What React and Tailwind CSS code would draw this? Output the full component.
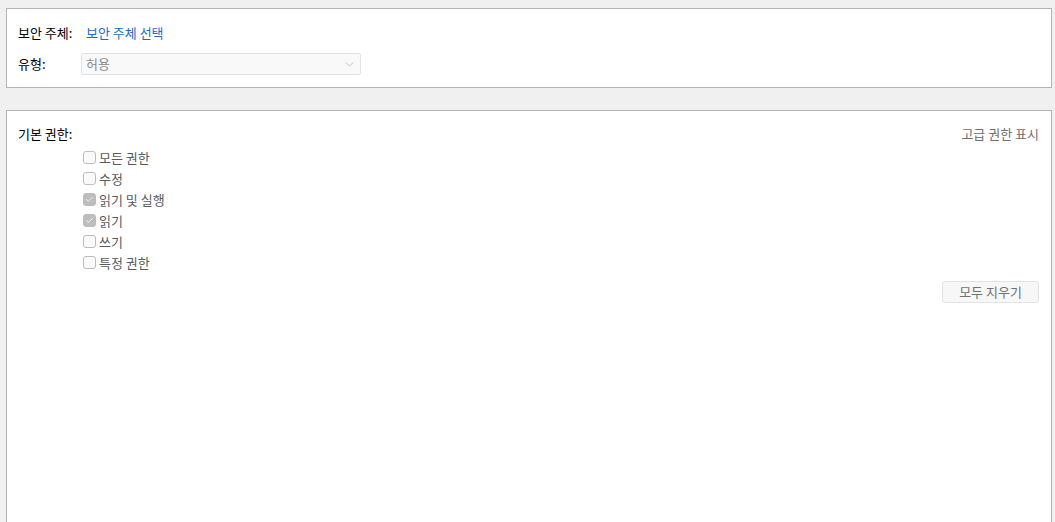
import { Check, ChevronDown } from 'lucide-react';

const perms = [
  { label: '모든 권한', checked: false },
  { label: '수정', checked: false },
  { label: '읽기 및 실행', checked: true },
  { label: '읽기', checked: true },
  { label: '쓰기', checked: false },
  { label: '특정 권한', checked: false },
];

const font = { fontFamily: '"Noto Sans CJK KR", "Noto Sans", sans-serif' };

const App = () => {
  return (
    <div className="h-[522px] overflow-hidden bg-[#f0f0f0] pt-2 pl-[6px] pr-[3px] text-[13px] text-black" style={font}>
      <div className="h-[80px] border border-[#b4b4b4] bg-white px-[11px] pt-[14px]">
        <div className="flex h-[20px] items-center">
          <span className="w-[68px]">보안 주체:</span>
          <span className="text-[#1a6dc4]">보안 주체 선택</span>
        </div>
        <div className="mt-[10px] flex items-center">
          <span className="w-[63px]">유형:</span>
          <div className="flex h-[22px] w-[280px] items-center justify-between rounded-[2px] border border-[#e3e3e3] bg-[#f9f9f9] pl-[4px] pr-[4px] text-[#8a8a8a]">
            <span>허용</span>
            <ChevronDown size={13} strokeWidth={1.2} className="text-[#a0a0a0]" />
          </div>
        </div>
      </div>
      <div className="mt-[22px] h-[420px] border border-[#b4b4b4] bg-white px-[11px] pt-[13px]">
        <div className="flex h-[20px] items-center justify-between">
          <span>기본 권한:</span>
          <span className="mr-[1px] text-[#707070]">고급 권한 표시</span>
        </div>
        <div className="ml-[65px] mt-[3px] flex flex-col">
          {perms.map((p) => (
            <div key={p.label} className="flex h-[21px] items-center gap-[3px] text-[#5a5a5a]">
              <span
                className={
                  p.checked
                    ? 'flex h-[13px] w-[13px] items-center justify-center rounded-[3px] border border-[#bdbdbd] bg-[#bdbdbd]'
                    : 'flex h-[13px] w-[13px] items-center justify-center rounded-[3px] border border-[#bdbdbd] bg-[#fafafa]'
                }
              >
                {p.checked && <Check size={9} strokeWidth={2} className="text-white" />}
              </span>
              <span>{p.label}</span>
            </div>
          ))}
        </div>
        <div className="mt-[8px] flex justify-end">
          <button className="mr-[1px] h-[22px] w-[97px] rounded-[3px] border border-[#e3e3e3] bg-[#f7f7f7] text-[#707070]">
            모두 지우기
          </button>
        </div>
      </div>
    </div>
  );
};

export default App;
